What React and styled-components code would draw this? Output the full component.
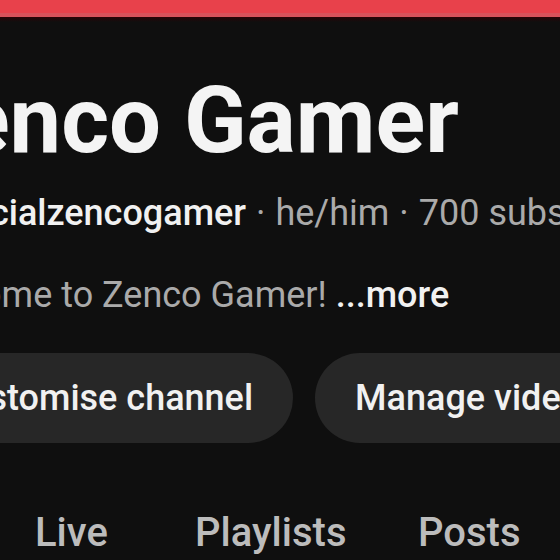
import styled, { createGlobalStyle } from "styled-components";

//global page styles
const GlobalStyle = createGlobalStyle`
  html, body {
    margin: 0;
    padding: 0;
    background: #0f0f0f;
    overflow: hidden;
  }
  body {
    font-family: Roboto, "Noto Sans", Arial, sans-serif;
    color: #f1f1f1;
  }
`;

//styles
const Page = styled.div`
  width: 560px;
  height: 560px;
  overflow: hidden;
  background: #0f0f0f;
  display: flex;
  flex-direction: column;
`;

const TopBar = styled.div`
  height: 17px;
  flex-shrink: 0;
  background: linear-gradient(#e8414b 0 13px, #d8525b 13px 17px);
  position: relative;

  &::after {
    content: "";
    position: absolute;
    left: 0;
    right: 0;
    top: 17px;
    height: 5px;
    background: linear-gradient(#2b0407, #0f0f0f);
  }
`;

const Header = styled.header`
  display: flex;
  flex-direction: column;
  margin-left: -95px;
  padding-top: 58px;
`;

const Title = styled.h1`
  margin: 0;
  font-size: 92px;
  line-height: 92px;
  font-weight: 700;
  color: #f4f4f4;
  white-space: nowrap;
`;

const Meta = styled.div`
  margin-top: ${({ $gap }) => $gap}px;
  margin-left: ${({ $shift = 0 }) => $shift}px;
  font-size: 36px;
  line-height: 40px;
  color: #aaa;
  white-space: nowrap;
`;

const Strong = styled.span`
  color: #f1f1f1;
  font-weight: 500;
`;

const Dot = styled.span`
  margin: 0 10px;
`;

const Buttons = styled.div`
  display: flex;
  gap: 22px;
  margin-top: 38px;
`;

const Button = styled.button`
  height: 90px;
  padding: 0 40px;
  border: none;
  border-radius: 45px;
  background: #272727;
  color: #f1f1f1;
  font-family: Roboto, "Noto Sans", Arial, sans-serif;
  font-size: 36px;
  font-weight: 500;
  white-space: nowrap;
  flex-shrink: 0;
`;

const Tabs = styled.nav`
  display: flex;
  padding-left: 35px;
  margin-top: 66px;
`;

const Tab = styled.div`
  width: ${({ $w }) => $w}px;
  flex-shrink: 0;
  font-size: 40px;
  line-height: 48px;
  font-weight: 500;
  color: #bcbcbc;
  white-space: nowrap;
`;

//component
export default function App() {
  return (
    <Page>
      <GlobalStyle />
      <TopBar />
      <Header>
        <Title>Zenco Gamer</Title>
        <Meta $gap={26}>
          <Strong>@officialzencogamer</Strong>
          <Dot>·</Dot>he/him<Dot>·</Dot>700 subscribers<Dot>·</Dot>12 videos
        </Meta>
        <Meta $gap={42} $shift={-2}>
          Welcome to Zenco Gamer! <Strong>...more</Strong>
        </Meta>
        <Buttons>
          <Button>Customise channel</Button>
          <Button>Manage videos</Button>
        </Buttons>
      </Header>
      <Tabs>
        <Tab $w={160}>Live</Tab>
        <Tab $w={223}>Playlists</Tab>
        <Tab $w={160}>Posts</Tab>
      </Tabs>
    </Page>
  );
}
